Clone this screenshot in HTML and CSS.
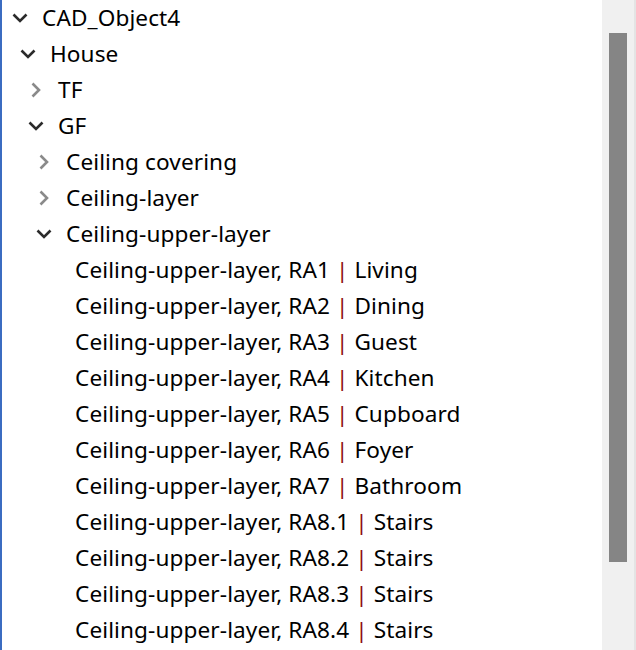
FILE: index.html
```html
<!DOCTYPE html>
<html lang="en">
<head>
  <meta charset="UTF-8">
  <title>CAD Tree</title>
  <link rel="stylesheet" href="styles.css">
</head>
<body>
  <div class="panel">
    <ul class="tree">
      <li class="row lvl-0"><span class="twisty open"><svg viewBox="0 0 16 10"><path d="M1.5 1.5 L8 8 L14.5 1.5"/></svg></span><span class="label">CAD_Object4</span></li>
      <li class="row lvl-1"><span class="twisty open"><svg viewBox="0 0 16 10"><path d="M1.5 1.5 L8 8 L14.5 1.5"/></svg></span><span class="label">House</span></li>
      <li class="row lvl-2"><span class="twisty closed"><svg viewBox="0 0 16 16"><path d="M4.5 1.5 L11 8 L4.5 14.5"/></svg></span><span class="label">TF</span></li>
      <li class="row lvl-2"><span class="twisty open"><svg viewBox="0 0 16 10"><path d="M1.5 1.5 L8 8 L14.5 1.5"/></svg></span><span class="label">GF</span></li>
      <li class="row lvl-3"><span class="twisty closed"><svg viewBox="0 0 16 16"><path d="M4.5 1.5 L11 8 L4.5 14.5"/></svg></span><span class="label">Ceiling covering</span></li>
      <li class="row lvl-3"><span class="twisty closed"><svg viewBox="0 0 16 16"><path d="M4.5 1.5 L11 8 L4.5 14.5"/></svg></span><span class="label">Ceiling-layer</span></li>
      <li class="row lvl-3"><span class="twisty open"><svg viewBox="0 0 16 10"><path d="M1.5 1.5 L8 8 L14.5 1.5"/></svg></span><span class="label">Ceiling-upper-layer</span></li>
      <li class="row lvl-4"><span class="label">Ceiling-upper-layer, RA1 <span class="sep">|</span> Living</span></li>
      <li class="row lvl-4"><span class="label">Ceiling-upper-layer, RA2 <span class="sep">|</span> Dining</span></li>
      <li class="row lvl-4"><span class="label">Ceiling-upper-layer, RA3 <span class="sep">|</span> Guest</span></li>
      <li class="row lvl-4"><span class="label">Ceiling-upper-layer, RA4 <span class="sep">|</span> Kitchen</span></li>
      <li class="row lvl-4"><span class="label">Ceiling-upper-layer, RA5 <span class="sep">|</span> Cupboard</span></li>
      <li class="row lvl-4"><span class="label">Ceiling-upper-layer, RA6 <span class="sep">|</span> Foyer</span></li>
      <li class="row lvl-4"><span class="label">Ceiling-upper-layer, RA7 <span class="sep">|</span> Bathroom</span></li>
      <li class="row lvl-4"><span class="label">Ceiling-upper-layer, RA8.1 <span class="sep">|</span> Stairs</span></li>
      <li class="row lvl-4"><span class="label">Ceiling-upper-layer, RA8.2 <span class="sep">|</span> Stairs</span></li>
      <li class="row lvl-4"><span class="label">Ceiling-upper-layer, RA8.3 <span class="sep">|</span> Stairs</span></li>
      <li class="row lvl-4"><span class="label">Ceiling-upper-layer, RA8.4 <span class="sep">|</span> Stairs</span></li>
    </ul>
    <div class="scrollbar">
      <div class="thumb"></div>
    </div>
  </div>
</body>
</html>
```

FILE: styles.css
```css
html, body {
  margin: 0;
  padding: 0;
  background: #ffffff;
  overflow: hidden;
}

body {
  font-family: "Noto Sans", "Open Sans", sans-serif;
  font-size: 22.6px;
  color: #000000;
}

.panel {
  display: flex;
  width: 636px;
  height: 650px;
  border-left: 2px solid #3b6cc1;
  box-sizing: border-box;
}

.tree {
  flex: 1;
  list-style: none;
  margin: 0;
  padding: 0;
}

.row {
  display: flex;
  align-items: center;
  height: 36px;
  white-space: nowrap;
}

.lvl-0 { padding-left: 10px; }
.lvl-1 { padding-left: 18px; }
.lvl-2 { padding-left: 26px; }
.lvl-3 { padding-left: 34px; }
.lvl-4 { padding-left: 73px; }

.twisty {
  width: 16px;
  height: 16px;
  margin-right: 14px;
  display: flex;
  align-items: center;
  justify-content: center;
}

.twisty svg {
  fill: none;
  stroke-width: 2.6;
  stroke-linecap: butt;
  stroke-linejoin: miter;
}

.twisty.open svg {
  width: 16px;
  height: 10px;
  stroke: #2b2b2b;
}

.twisty.closed svg {
  width: 16px;
  height: 16px;
  stroke: #8a8a8a;
}

.label {
  line-height: 36px;
  letter-spacing: 0.1px;
}

.sep {
  color: #8e0f0f;
}

.scrollbar {
  width: 34px;
  height: 100%;
  background: #f0f0f0;
  border-right: 2px solid #e4e4e4;
  padding: 33px 7px 0 7px;
  box-sizing: border-box;
}

.thumb {
  height: 529px;
  background: #858585;
}
```
